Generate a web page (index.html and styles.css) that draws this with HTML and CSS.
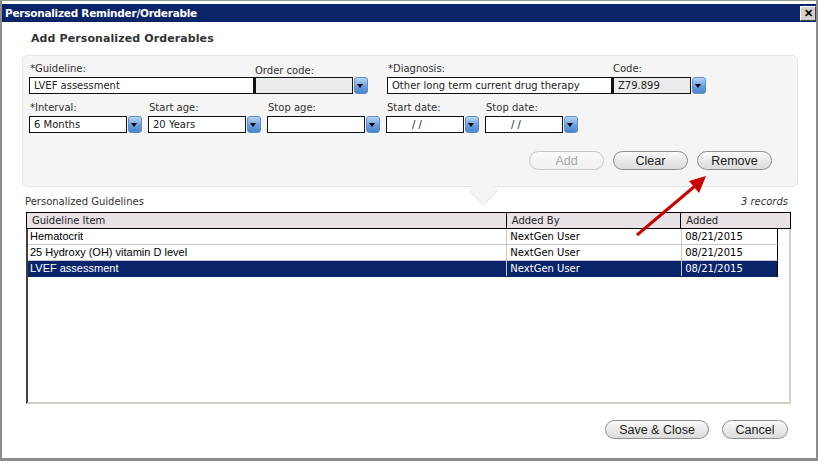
FILE: index.html
```html
<!DOCTYPE html>
<html lang="en">
<head>
    <meta charset="UTF-8">
    <title>Personalized Reminder/Orderable</title>
    <link rel="stylesheet" href="styles.css">
</head>
<body>
    <div class="window">
        <!-- Title bar -->
        <div class="titlebar">
            <span class="title">Personalized Reminder/Orderable</span>
            <button class="close-btn">&#x2715;</button>
        </div>

        <div class="content">
            <h1>Add Personalized Orderables</h1>

            <!-- Form panel -->
            <div class="panel">
                <div class="form-row">
                    <div class="field w-guideline">
                        <label>*Guideline:</label>
                        <div class="combo"><input class="txt" type="text" value="LVEF assessment"></div>
                    </div>
                    <div class="field w-code">
                        <label class="low">Order code:</label>
                        <div class="combo"><input class="txt readonly" type="text" value=""><span class="drop"></span></div>
                    </div>
                    <div class="field w-diag">
                        <label>*Diagnosis:</label>
                        <div class="combo"><input class="txt" type="text" value="Other long term current drug therapy"></div>
                    </div>
                    <div class="field w-dcode">
                        <label>Code:</label>
                        <div class="combo"><input class="txt readonly" type="text" value="Z79.899"><span class="drop"></span></div>
                    </div>
                </div>

                <div class="form-row row-2">
                    <div class="field w-small">
                        <label>*Interval:</label>
                        <div class="combo"><input class="txt" type="text" value="6 Months"><span class="drop"></span></div>
                    </div>
                    <div class="field w-small">
                        <label>Start age:</label>
                        <div class="combo"><input class="txt" type="text" value="20 Years"><span class="drop"></span></div>
                    </div>
                    <div class="field w-small">
                        <label>Stop age:</label>
                        <div class="combo"><input class="txt" type="text" value=""><span class="drop"></span></div>
                    </div>
                    <div class="field w-date">
                        <label>Start date:</label>
                        <div class="combo"><input class="txt date" type="text" value="/ /"><span class="drop"></span></div>
                    </div>
                    <div class="field w-date">
                        <label>Stop date:</label>
                        <div class="combo"><input class="txt date" type="text" value="/ /"><span class="drop"></span></div>
                    </div>
                </div>

                <div class="actions">
                    <button class="pill" disabled>Add</button>
                    <button class="pill">Clear</button>
                    <button class="pill">Remove</button>
                </div>
            </div>

            <!-- Guidelines grid -->
            <div class="grid-caption">
                <span>Personalized Guidelines</span>
                <span class="records">3 records</span>
            </div>

            <div class="grid">
                <div class="grid-head">
                    <div class="col-item">Guideline Item</div>
                    <div class="col-by">Added By</div>
                    <div class="col-date">Added</div>
                </div>
                <div class="grid-body">
                    <div class="grid-row">
                        <div class="col-item">Hematocrit</div>
                        <div class="col-by">NextGen User</div>
                        <div class="col-date">08/21/2015</div>
                    </div>
                    <div class="grid-row">
                        <div class="col-item">25 Hydroxy (OH) vitamin D level</div>
                        <div class="col-by">NextGen User</div>
                        <div class="col-date">08/21/2015</div>
                    </div>
                    <div class="grid-row selected">
                        <div class="col-item">LVEF assessment</div>
                        <div class="col-by">NextGen User</div>
                        <div class="col-date">08/21/2015</div>
                    </div>
                </div>
            </div>

            <div class="footer">
                <button class="pill big">Save &amp; Close</button>
                <button class="pill big">Cancel</button>
            </div>
        </div>

        <!-- Annotation arrow -->
        <svg class="arrow" width="818" height="461" viewBox="0 0 818 461">
            <line x1="637" y1="235" x2="695" y2="186" stroke="#c80000" stroke-width="3"/>
            <polygon points="706,176 689,181 699,193" fill="#c80000"/>
        </svg>
    </div>
</body>
</html>
```

FILE: styles.css
```css
body {
    margin: 0;
    background-color: #ffffff;
    font-family: Tahoma, "DejaVu Sans", sans-serif;
}
.window {
    position: relative;
    width: 818px;
    height: 461px;
    box-sizing: border-box;
    border: 2px solid #8c8c8c;
    border-top: 1px solid #9a9a9a;
    border-bottom: 3px solid #8c8c8c;
    background-color: #ffffff;
    overflow: hidden;
}
.titlebar {
    margin: 3px 0 0 0;
    height: 18px;
    background-color: #0a246a;
    display: flex;
    align-items: center;
    justify-content: space-between;
    padding: 0 0 0 3px;
}
.title {
    color: #ffffff;
    font-family: "DejaVu Sans", sans-serif;
    font-weight: bold;
    font-size: 10.5px;
    letter-spacing: -0.25px;
}
.close-btn {
    width: 16px;
    height: 15px;
    margin-right: 0;
    padding: 0;
    border: 1px solid;
    border-color: #ffffff #404040 #404040 #ffffff;
    background-color: #d4d0c8;
    font-size: 11px;
    font-weight: bold;
    line-height: 12px;
    color: #000000;
}
.content {
    padding: 0 0 0 20px;
}
h1 {
    margin: 10px 0 0 9px;
    font-family: "DejaVu Sans", sans-serif;
    font-size: 11px;
    font-weight: bold;
    color: #333333;
    height: 22px;
    letter-spacing: 0.1px;
}

/* form panel */
.panel {
    position: relative;
    width: 776px;
    height: 132px;
    margin-top: 1px;
    box-sizing: border-box;
    background-color: #f5f5f5;
    border: 1px solid #e6e6e6;
    border-radius: 5px;
    padding: 1px 0 0 6px;
}
.panel::after {
    content: "";
    position: absolute;
    left: 450px;
    bottom: -15px;
    width: 20px;
    height: 20px;
    background-color: #f5f5f5;
    border-right: 1px solid #e6e6e6;
    border-bottom: 1px solid #e6e6e6;
    transform: rotate(45deg);
}
.form-row {
    display: flex;
    gap: 6px;
}
.row-2 {
    margin-top: 7px;
}
.field label {
    display: block;
    font-family: "DejaVu Sans", sans-serif;
    font-size: 10px;
    color: #333333;
    height: 15px;
    line-height: 14px;
    padding-left: 1px;
}
.field label.low {
    line-height: 18px;
}
.combo {
    display: flex;
    align-items: stretch;
    height: 17px;
}
.txt {
    flex: 1;
    min-width: 0;
    height: 17px;
    box-sizing: border-box;
    border: 1px solid #111111;
    padding: 0 4px;
    font-family: "DejaVu Sans", sans-serif;
    font-size: 10px;
    color: #222222;
    background-color: #ffffff;
    outline: none;
}
.txt.readonly {
    background-color: #ececec;
    border-left-width: 2px;
}
.txt.date {
    padding-left: 25px;
}
.drop {
    position: relative;
    width: 12px;
    margin-left: 1px;
    border: 1px solid #5b8fcc;
    border-radius: 3px;
    background: linear-gradient(#b9d4f4, #6a9fdc 55%, #4b84cc);
}
.drop::after {
    content: "";
    position: absolute;
    left: 2px;
    top: 6px;
    border-left: 3px solid transparent;
    border-right: 3px solid transparent;
    border-top: 4px solid #000000;
}
.w-guideline { width: 225px; margin-top: 5px; }
.w-code { width: 114px; margin-left: -6px; margin-top: 5px; }
.w-diag { width: 225px; margin-left: 13px; margin-top: 5px; }
.w-dcode { width: 94px; margin-left: -6px; margin-top: 5px; }
.w-small { width: 113px; }
.w-date { width: 93px; }

.actions {
    display: flex;
    justify-content: flex-end;
    gap: 9px;
    margin: 18px 25px 0 0;
}
.pill {
    width: 75px;
    height: 19px;
    padding: 0;
    border: 1px solid #8f8f8f;
    border-radius: 10px;
    background: linear-gradient(#fbfbfb, #e9e9e9 50%, #dcdcdc);
    font-family: "Liberation Sans", sans-serif;
    font-size: 12.5px;
    color: #222222;
}
.pill:disabled {
    color: #a8a8a8;
    border-color: #c8c8c8;
    background: linear-gradient(#fafafa, #f0f0f0);
}

/* grid */
.grid-caption {
    display: flex;
    justify-content: space-between;
    width: 763px;
    margin: 9px 0 0 3px;
    font-family: "DejaVu Sans", sans-serif;
    font-size: 10px;
    color: #333333;
    height: 14px;
}
.records {
    font-style: italic;
}
.grid {
    width: 765px;
    margin: 2px 0 0 4px;
}
.grid-head {
    display: flex;
    height: 17px;
    box-sizing: border-box;
    border: 1px solid #000000;
    background-color: #e6e2e6;
    font-family: "DejaVu Sans", sans-serif;
    font-size: 10px;
    line-height: 15px;
    color: #222222;
}
.grid-head div {
    padding-left: 5px;
    box-sizing: border-box;
    border-right: 1px solid #000000;
}
.grid-head .col-date {
    border-right: none;
}
.col-item { width: 481px; }
.col-by { width: 175px; }
.col-date { width: 109px; }
.grid-body {
    height: 175px;
    box-sizing: border-box;
    border-left: 2px solid #404040;
    border-right: 2px solid #d4d0c8;
    border-bottom: 2px solid #d4d0c8;
}
.grid-row {
    display: flex;
    width: 750px;
    height: 16px;
    box-sizing: border-box;
    border-right: 1px solid #000000;
    border-bottom: 1px solid #c8c8c8;
    font-family: "Liberation Sans", sans-serif;
    font-size: 11px;
    line-height: 15px;
    color: #000000;
}
.grid-row div {
    box-sizing: border-box;
    padding-left: 2px;
    border-right: 1px solid #c8c8c8;
}
.grid-row .col-item { width: 480px; }
.grid-row .col-by {
    font-family: "DejaVu Sans", sans-serif;
    font-size: 10px;
    padding-left: 3px;
}
.grid-row .col-date {
    width: 95px;
    border-right: none;
    font-family: "DejaVu Sans", sans-serif;
    font-size: 10px;
    padding-left: 3px;
}
.grid-row.selected {
    background-color: #0a246a;
    color: #ffffff;
    border-bottom: 1px solid #0a246a;
}

.footer {
    display: flex;
    justify-content: flex-end;
    gap: 13px;
    margin: 16px 28px 0 0;
}
.pill.big {
    height: 19px;
    font-size: 12.5px;
    color: #222222;
}
.pill.big:first-child { width: 104px; }
.pill.big:last-child { width: 66px; }

.arrow {
    position: absolute;
    left: -2px;
    top: -1px;
    pointer-events: none;
}
```
